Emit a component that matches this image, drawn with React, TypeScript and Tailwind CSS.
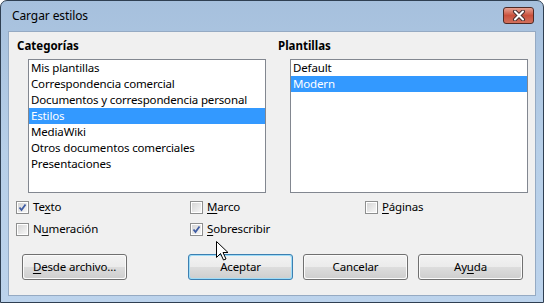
import React from "react";

const font = { fontFamily: '"Noto Sans", "Segoe UI", sans-serif' };

function U({ children }: { children: React.ReactNode }) {
  return <span className="underline underline-offset-2">{children}</span>;
}

function Check({ checked, children }: { checked?: boolean; children: React.ReactNode }) {
  return (
    <div className="flex items-center gap-[4px] h-4 text-[11.5px] tracking-[-0.15px] text-black">
      <div className="w-[13px] h-[13px] border border-[#8e8f8f] bg-white p-px">
        <div className="w-full h-full bg-gradient-to-br from-[#d6d6d6] to-[#f6f6f6] relative">
          {checked && (
            <svg width="11" height="11" viewBox="0 0 11 11" className="absolute -left-px -top-px">
              <path d="M2.5 5.5 L4.5 8 L8.5 2.5" fill="none" stroke="#3f5ca3" strokeWidth="1.8" />
            </svg>
          )}
        </div>
      </div>
      <span className="leading-4">{children}</span>
    </div>
  );
}

function Btn({ children, focus }: { children: React.ReactNode; focus?: boolean }) {
  return (
    <div
      className={
        "w-[105px] h-[26px] rounded-[3px] border p-px " +
        (focus ? "border-[#3c7fb1] bg-[#9fdcf7]" : "border-[#707070] bg-[#fbfbfb]")
      }
    >
      <div className="w-full h-full rounded-[2px] flex flex-col overflow-hidden relative">
        <div className="flex-1 bg-gradient-to-b from-[#f2f2f2] to-[#ebebeb]" />
        <div className="flex-1 bg-gradient-to-b from-[#dddddd] to-[#cfcfcf]" />
        <div className="absolute inset-0 flex items-center justify-center text-[11.5px] tracking-[-0.15px] text-black">
          {children}
        </div>
      </div>
    </div>
  );
}

const categorias = [
  "Mis plantillas",
  "Correspondencia comercial",
  "Documentos y correspondencia personal",
  "Estilos",
  "MediaWiki",
  "Otros documentos comerciales",
  "Presentaciones",
];
const plantillas = ["Default", "Modern"];

function ListBox({ items, sel }: { items: string[]; sel: number }) {
  return (
    <div className="w-[238px] h-[134px] border border-[#828790] bg-white">
      {items.map((t, i) => (
        <div
          key={t}
          className={
            "h-4 leading-4 px-[2px] text-[11.5px] tracking-[-0.15px] whitespace-nowrap " +
            (i === sel ? "bg-[#3399ff] text-white" : "text-black")
          }
        >
          {t}
        </div>
      ))}
    </div>
  );
}

export default function App() {
  return (
    <div className="w-[544px] h-[303px] relative bg-white overflow-hidden" style={font}>
      <div className="h-full flex flex-col rounded-t-[7px] border border-[#2f3f52] bg-gradient-to-b from-[#a6c0dd] via-[#b7cfe8] to-[#bcd3ec]">
        <div className="h-[30px] flex items-center justify-between pl-[11px] pr-[9px]">
          <span className="text-[12px] tracking-[-0.1px] text-black">Cargar estilos</span>
          <div className="w-[31px] h-[17px] mt-[-2px] rounded-[3px] border border-[#4e2a25] bg-gradient-to-b from-[#e6a293] via-[#c9503c] to-[#d2705c] flex items-center justify-center">
            <svg width="14" height="11" viewBox="0 0 14 11">
              <path d="M3 1.5 L11 9.5 M11 1.5 L3 9.5" stroke="#4a3030" strokeWidth="4" strokeLinecap="round" />
              <path d="M3 1.5 L11 9.5 M11 1.5 L3 9.5" stroke="#ffffff" strokeWidth="2" strokeLinecap="round" />
            </svg>
          </div>
        </div>
        <div className="flex-1 mx-[7px] mb-[6px] bg-[#f0f0f0] border border-[#95aac3] flex flex-col">
          <div className="grid grid-cols-[249px_250px] gap-x-[12px] pl-[8px] pt-[6px]">
            <div>
              <div className="h-4 leading-4 text-[11.5px] font-bold text-black">Categorías</div>
              <div className="mt-[5px] ml-[11px]">
                <ListBox items={categorias} sel={3} />
              </div>
            </div>
            <div>
              <div className="h-4 leading-4 text-[11.5px] font-bold text-black">Plantillas</div>
              <div className="mt-[5px] ml-[12px]">
                <ListBox items={plantillas} sel={1} />
              </div>
            </div>
          </div>
          <div className="grid grid-cols-[174px_175px_auto] gap-y-[6px] pl-[7px] mt-[6px]">
            <Check checked>
              Te<U>x</U>to
            </Check>
            <Check>
              <U>M</U>arco
            </Check>
            <Check>
              <U>P</U>áginas
            </Check>
            <Check>
              N<U>u</U>meración
            </Check>
            <Check checked>
              <U>S</U>obrescribir
            </Check>
          </div>
          <div className="flex items-center pl-[13px] mt-[17px]">
            <Btn>
              <span>
                <U>D</U>esde archivo...
              </span>
            </Btn>
            <div className="flex gap-[10px] ml-[61px]">
              <Btn focus>Aceptar</Btn>
              <Btn>Cancelar</Btn>
              <Btn>
                <span>
                  Ay<U>u</U>da
                </span>
              </Btn>
            </div>
          </div>
        </div>
      </div>
      <svg width="13" height="20" viewBox="0 0 13 20" className="absolute left-[216px] top-[241px]">
        <path d="M0.5 0.5 L0.5 16.5 L4.5 12.5 L7.5 19 L10 18 L7 11.5 L12 11.5 Z" fill="#ffffff" stroke="#000000" strokeWidth="1" />
      </svg>
    </div>
  );
}
